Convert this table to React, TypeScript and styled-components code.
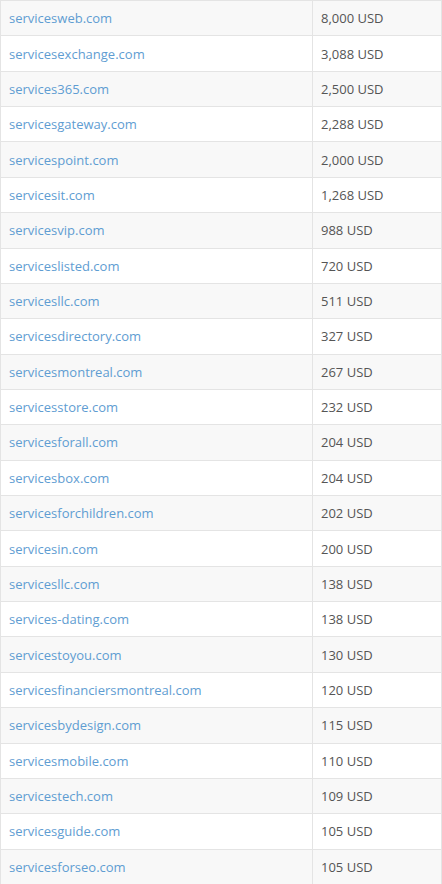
import styled, { createGlobalStyle } from "styled-components";

const rows: [string, string][] = [
  ["servicesweb.com", "8,000 USD"],
  ["servicesexchange.com", "3,088 USD"],
  ["services365.com", "2,500 USD"],
  ["servicesgateway.com", "2,288 USD"],
  ["servicespoint.com", "2,000 USD"],
  ["servicesit.com", "1,268 USD"],
  ["servicesvip.com", "988 USD"],
  ["serviceslisted.com", "720 USD"],
  ["servicesllc.com", "511 USD"],
  ["servicesdirectory.com", "327 USD"],
  ["servicesmontreal.com", "267 USD"],
  ["servicesstore.com", "232 USD"],
  ["servicesforall.com", "204 USD"],
  ["servicesbox.com", "204 USD"],
  ["servicesforchildren.com", "202 USD"],
  ["servicesin.com", "200 USD"],
  ["servicesllc.com", "138 USD"],
  ["services-dating.com", "138 USD"],
  ["servicestoyou.com", "130 USD"],
  ["servicesfinanciersmontreal.com", "120 USD"],
  ["servicesbydesign.com", "115 USD"],
  ["servicesmobile.com", "110 USD"],
  ["servicestech.com", "109 USD"],
  ["servicesguide.com", "105 USD"],
  ["servicesforseo.com", "105 USD"],
];

const GlobalStyle = createGlobalStyle`
  body {
    margin: 0;
    background: #fff;
    font-family: "Open Sans", "Liberation Sans", sans-serif;
  }
`;

const Table = styled.div`
  width: 442px;
  border-left: 1px solid #e4e4e4;
  border-right: 1px solid #e4e4e4;
  box-sizing: border-box;
`;

const Row = styled.div<{ $striped: boolean }>`
  display: grid;
  grid-template-columns: 311px 1fr;
  height: 35.36px;
  box-sizing: border-box;
  border-top: 1px solid #e4e4e4;
  background: ${(p) => (p.$striped ? "#f8f8f8" : "#fff")};
`;

const Cell = styled.div`
  display: flex;
  align-items: center;
  padding: 0 8px;
  font-size: 13px;
  color: #555;
  & + & {
    border-left: 1px solid #e4e4e4;
  }
`;

const Domain = styled.a`
  color: #5f9dd2;
  text-decoration: none;
`;

export default function App() {
  return (
    <>
      <GlobalStyle />
      <Table>
        {rows.map(([domain, price], i) => (
          <Row key={i} $striped={i % 2 === 0}>
            <Cell>
              <Domain href="#">{domain}</Domain>
            </Cell>
            <Cell>{price}</Cell>
          </Row>
        ))}
      </Table>
    </>
  );
}
